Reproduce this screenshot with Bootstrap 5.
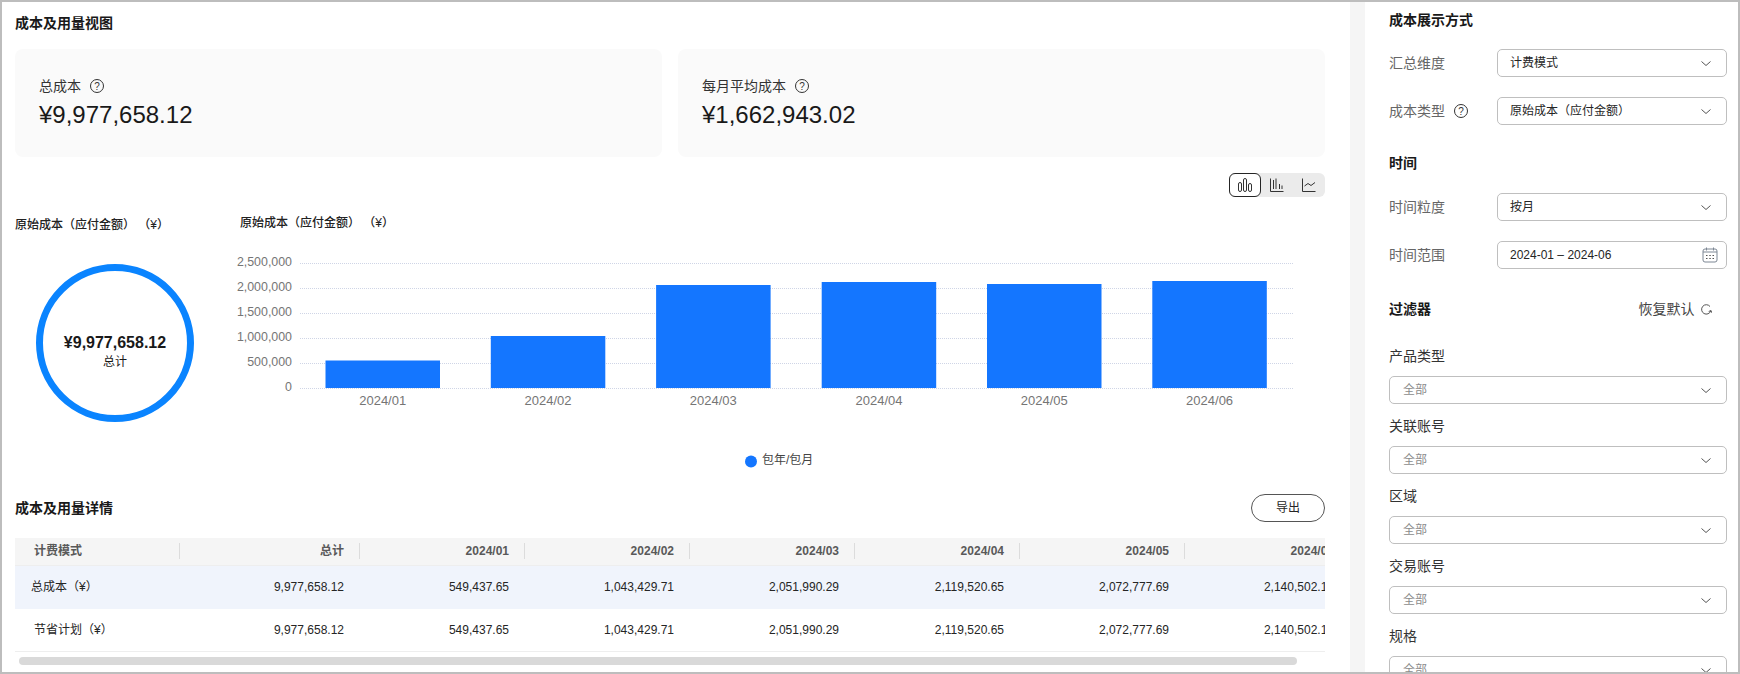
<!DOCTYPE html>
<html lang="zh-CN">
<head>
<meta charset="utf-8">
<title>成本及用量视图</title>
<link rel="stylesheet" href="https://cdn.jsdelivr.net/npm/bootstrap@5.3.0/dist/css/bootstrap.min.css">
<style>
html,body{height:674px;overflow:hidden;background:#fff}
body{font-family:"Liberation Sans","Noto Sans CJK SC",sans-serif;font-size:12px;color:#252525;line-height:18px}
.frame{height:674px;border:2px solid #bdbdbd;background:#f5f5f5;gap:15px;overflow:hidden}
.mainpane{width:1348px;flex:none;background:#fff;padding:11px 25px 0 13px;overflow:hidden}
.sidepane{flex:1 1 0;background:#fff;padding:8px 11.5px 0 24px;overflow:hidden}
.sect{font-size:14px;line-height:20px;font-weight:700;color:#191919;margin:0}
.stats{margin-top:16px;gap:16px}
.stat{flex:1 1 0;height:108px;background:#fafafa;border-radius:8px;padding:27px 24px 0}
.stat-label{font-size:14px;line-height:20px;color:#333;gap:9px}
.stat-val{font-size:24px;line-height:32px;margin-top:3px;color:#191919}
.hint{flex:none;display:block}
.modes{margin-top:16px;height:24px}
.modegroup{background:#ebebeb;border-radius:6px;height:24px;width:96px}
.modebtn{width:32px;height:24px;border:1px solid transparent;border-radius:6px;padding:0;background:transparent}
.modebtn.on{border-color:#252525;background:#fff}
.chartrow{height:297px}
.donutcol{width:225px;flex:none;padding-top:19px}
.charttitle{font-size:12px;line-height:18px;font-weight:500;color:#222}
.donut{display:block;margin:30px 0 0 21px}
.barcol{flex:1 1 0;padding-top:17px}
.barsvg{display:block;margin:18px 0 0 -10px}
.barsvg text{font-family:"Liberation Sans","Noto Sans CJK SC",sans-serif;fill:#757575}
.barsvg .ylab{font-size:12.4px}
.barsvg .xlab{font-size:13px}
.barsvg .leg{fill:#444;font-size:12px}
.donut text{font-family:"Liberation Sans","Noto Sans CJK SC",sans-serif;fill:#191919}
.detailhead{height:28px}
.exportbtn{width:74px;height:28px;padding:0;font-size:12px;line-height:26px;border:1px solid #555;border-radius:14px;color:#252525;background:#fff}
.tablewrap{margin-top:16px;overflow:hidden;width:1310px}
.costtable{table-layout:fixed;width:1335px;margin:0;font-size:12px;color:#252525;--bs-table-bg:transparent;--bs-table-border-color:transparent}
.costtable th,.costtable td{padding:0 16px 0 15px;vertical-align:middle;text-align:right;white-space:nowrap;border-bottom:0;line-height:16px}
.costtable thead th{height:27px;background:#f5f5f5 linear-gradient(#dcdcdc,#dcdcdc) right center/1px 16px no-repeat;color:#595959;font-weight:700;border-bottom:1px solid #eee}
.costtable thead th:last-child{background-image:none}
.costtable th:first-child,.costtable td:first-child{text-align:left;padding-left:19px}
.costtable tbody tr:first-child td{height:44px;background:#f0f4fc}
.costtable tbody tr:first-child td:first-child{padding-left:16px}
.costtable tbody tr:last-child td{height:42px;border-bottom:1px solid #eee}
.hbar{height:8px;margin:5px 28px 0 4px;border-radius:4px;background:#d9d9d9}
.field{height:28px;margin-top:20px}
.field-first{margin-top:19px}
.field-label{width:108px;flex:none;font-size:14px;line-height:20px;color:#666;gap:9px}
.pick{height:28px;padding:0 12px;font-size:12px;line-height:26px;color:#252525;border:1px solid #bfbfbf;border-radius:5px}
.pick.form-select{background-size:10px 5px;background-position:right 15px center;background-image:url("data:image/svg+xml,%3Csvg xmlns='http://www.w3.org/2000/svg' viewBox='0 0 10 5'%3E%3Cpath d='M.5.5 5 4.5 9.5.5' fill='none' stroke='%23555'/%3E%3C/svg%3E")}
.pick.blank{color:#8c8c8c}
.sect-time{margin-top:28px}
.filterhead{margin-top:30px}
.resetlink{font-size:14px;line-height:20px;color:#444;gap:6px;padding-right:15px}
.flabel{font-size:14px;line-height:20px;color:#333;margin-top:12px}
.flabel-first{margin-top:27px}
.fpick{margin-top:10px;padding-left:13px}
</style>
</head>
<body>
<div class="frame d-flex">
  <main class="mainpane">
    <h2 class="sect">成本及用量视图</h2>
    <div class="stats d-flex">
      <div class="stat">
        <div class="stat-label d-flex align-items-center">总成本
          <svg class="hint" width="14" height="14" viewBox="0 0 14 14"><circle cx="7" cy="7" r="6.5" fill="none" stroke="#333"/><text x="7" y="10.5" text-anchor="middle" font-size="10" fill="#333" font-family="Liberation Sans">?</text></svg>
        </div>
        <div class="stat-val">¥9,977,658.12</div>
      </div>
      <div class="stat">
        <div class="stat-label d-flex align-items-center">每月平均成本
          <svg class="hint" width="14" height="14" viewBox="0 0 14 14"><circle cx="7" cy="7" r="6.5" fill="none" stroke="#333"/><text x="7" y="10.5" text-anchor="middle" font-size="10" fill="#333" font-family="Liberation Sans">?</text></svg>
        </div>
        <div class="stat-val">¥1,662,943.02</div>
      </div>
    </div>
    <div class="modes d-flex justify-content-end">
      <div class="modegroup d-flex">
        <button class="modebtn on d-flex align-items-center justify-content-center" type="button" aria-label="柱状图">
          <svg width="14" height="14" viewBox="0 0 14 14" fill="none" stroke="#333"><rect x=".5" y="4.5" width="3" height="9" rx="1.5"/><rect x="5.500" y=".5" width="3" height="13" rx="1.5"/><rect x="10.500" y="5.500" width="3" height="8" rx="1.5"/></svg>
        </button>
        <button class="modebtn d-flex align-items-center justify-content-center" type="button" aria-label="多柱图">
          <svg width="14" height="14" viewBox="0 0 14 14" fill="none" stroke="#333"><path d="M.5.5v13h13M3.500 2v9M6 .5V11M9.500 6v5M12 7.500V11"/></svg>
        </button>
        <button class="modebtn d-flex align-items-center justify-content-center" type="button" aria-label="折线图">
          <svg width="14" height="14" viewBox="0 0 14 14" fill="none" stroke="#333"><path d="M.5.5v13h13M2.500 8 6 5.500l3 2L13 4.500"/></svg>
        </button>
      </div>
    </div>
    <div class="chartrow d-flex">
      <div class="donutcol">
        <div class="charttitle">原始成本（应付金额）&nbsp;（¥）</div>
        <svg class="donut" width="158" height="158" viewBox="0 0 158 158">
          <circle cx="79" cy="79" r="75.500" fill="none" stroke="#0a84ff" stroke-width="7"/>
          <text x="79" y="84" text-anchor="middle" font-size="16" font-weight="700">¥9,977,658.12</text>
          <text x="79" y="102" text-anchor="middle" font-size="12">总计</text>
        </svg>
      </div>
      <div class="barcol">
        <div class="charttitle">原始成本（应付金额）&nbsp;（¥）</div>
        <svg class="barsvg" width="1070" height="220" viewBox="-10 0 1070 220">
          <g stroke="#cfd5e6" stroke-dasharray="1 1">
            <path d="M60 13.500H1053M60 38.500H1053M60 63.500H1053M60 88.500H1053M60 113.500H1053M60 138.500H1053"/>
          </g>
          <g text-anchor="end" class="ylab">
            <text x="52" y="16">2,500,000</text>
            <text x="52" y="41">2,000,000</text>
            <text x="52" y="66">1,500,000</text>
            <text x="52" y="91">1,000,000</text>
            <text x="52" y="116">500,000</text>
            <text x="52" y="141">0</text>
          </g>
          <g fill="#1476ff">
            <rect x="85.500" y="110.500" width="114.500" height="27.500"/>
            <rect x="250.800" y="86" width="114.500" height="52"/>
            <rect x="416.100" y="35" width="114.500" height="103"/>
            <rect x="581.700" y="32" width="114.500" height="106"/>
            <rect x="747" y="34" width="114.500" height="104"/>
            <rect x="912.300" y="31" width="114.500" height="107"/>
          </g>
          <g text-anchor="middle" class="xlab">
            <text x="142.700" y="154.500">2024/01</text>
            <text x="308" y="154.500">2024/02</text>
            <text x="473.300" y="154.500">2024/03</text>
            <text x="639" y="154.500">2024/04</text>
            <text x="804.300" y="154.500">2024/05</text>
            <text x="969.600" y="154.500">2024/06</text>
          </g>
          <circle cx="511" cy="211.500" r="6" fill="#1476ff"/>
          <text class="leg" x="522" y="214">包年/包月</text>
        </svg>
      </div>
    </div>
    <div class="detailhead d-flex justify-content-between align-items-center">
      <h2 class="sect">成本及用量详情</h2>
      <button class="exportbtn btn" type="button">导出</button>
    </div>
    <div class="tablewrap">
      <table class="table costtable">
        <colgroup><col style="width:165px"><col style="width:180px"><col style="width:165px"><col style="width:165px"><col style="width:165px"><col style="width:165px"><col style="width:165px"><col style="width:165px"></colgroup>
        <thead><tr><th>计费模式</th><th>总计</th><th>2024/01</th><th>2024/02</th><th>2024/03</th><th>2024/04</th><th>2024/05</th><th>2024/06</th></tr></thead>
        <tbody>
          <tr><td>总成本（¥）</td><td>9,977,658.12</td><td>549,437.65</td><td>1,043,429.71</td><td>2,051,990.29</td><td>2,119,520.65</td><td>2,072,777.69</td><td>2,140,502.13</td></tr>
          <tr><td>节省计划（¥）</td><td>9,977,658.12</td><td>549,437.65</td><td>1,043,429.71</td><td>2,051,990.29</td><td>2,119,520.65</td><td>2,072,777.69</td><td>2,140,502.13</td></tr>
        </tbody>
      </table>
    </div>
    <div class="hbar"></div>
  </main>
  <aside class="sidepane">
    <h2 class="sect">成本展示方式</h2>
    <div class="field field-first d-flex align-items-center">
      <div class="field-label">汇总维度</div>
      <div class="form-select pick flex-fill">计费模式</div>
    </div>
    <div class="field d-flex align-items-center">
      <div class="field-label d-flex align-items-center">成本类型
        <svg class="hint" width="14" height="14" viewBox="0 0 14 14"><circle cx="7" cy="7" r="6.5" fill="none" stroke="#333"/><text x="7" y="10.5" text-anchor="middle" font-size="10" fill="#333" font-family="Liberation Sans">?</text></svg>
      </div>
      <div class="form-select pick flex-fill">原始成本（应付金额）</div>
    </div>
    <h2 class="sect sect-time">时间</h2>
    <div class="field d-flex align-items-center">
      <div class="field-label">时间粒度</div>
      <div class="form-select pick flex-fill">按月</div>
    </div>
    <div class="field d-flex align-items-center">
      <div class="field-label">时间范围</div>
      <div class="form-control pick flex-fill d-flex align-items-center justify-content-between pe-2">2024-01 – 2024-06
        <svg width="16" height="16" viewBox="0 0 16 16" fill="none" stroke="#7d8794"><rect x="1" y="2" width="14" height="13" rx="2"/><path d="M1 5h14M4.500.5v3M11.500.5v3"/><path d="M4 8.500h1.500M7.300 8.500h1.500M10.500 8.500H12M4 11.500h1.500M7.300 11.500h1.500M10.500 11.500H12" stroke="#555"/></svg>
      </div>
    </div>
    <div class="filterhead d-flex justify-content-between align-items-center">
      <h2 class="sect">过滤器</h2>
      <div class="resetlink d-flex align-items-center">恢复默认
        <svg width="11" height="11" viewBox="0 0 11 11" fill="none" stroke="#555"><path d="M9.800 6.800A4.700 4.700 0 1 1 9 2.500"/><path d="M7.700 7.500 10 6.500l.8 2.300"/></svg>
      </div>
    </div>
    <div class="flabel flabel-first">产品类型</div>
    <div class="form-select pick blank fpick">全部</div>
    <div class="flabel">关联账号</div>
    <div class="form-select pick blank fpick">全部</div>
    <div class="flabel">区域</div>
    <div class="form-select pick blank fpick">全部</div>
    <div class="flabel">交易账号</div>
    <div class="form-select pick blank fpick">全部</div>
    <div class="flabel">规格</div>
    <div class="form-select pick blank fpick">全部</div>
  </aside>
</div>
<script src="https://cdn.jsdelivr.net/npm/bootstrap@5.3.0/dist/js/bootstrap.bundle.min.js"></script>
</body>
</html>
